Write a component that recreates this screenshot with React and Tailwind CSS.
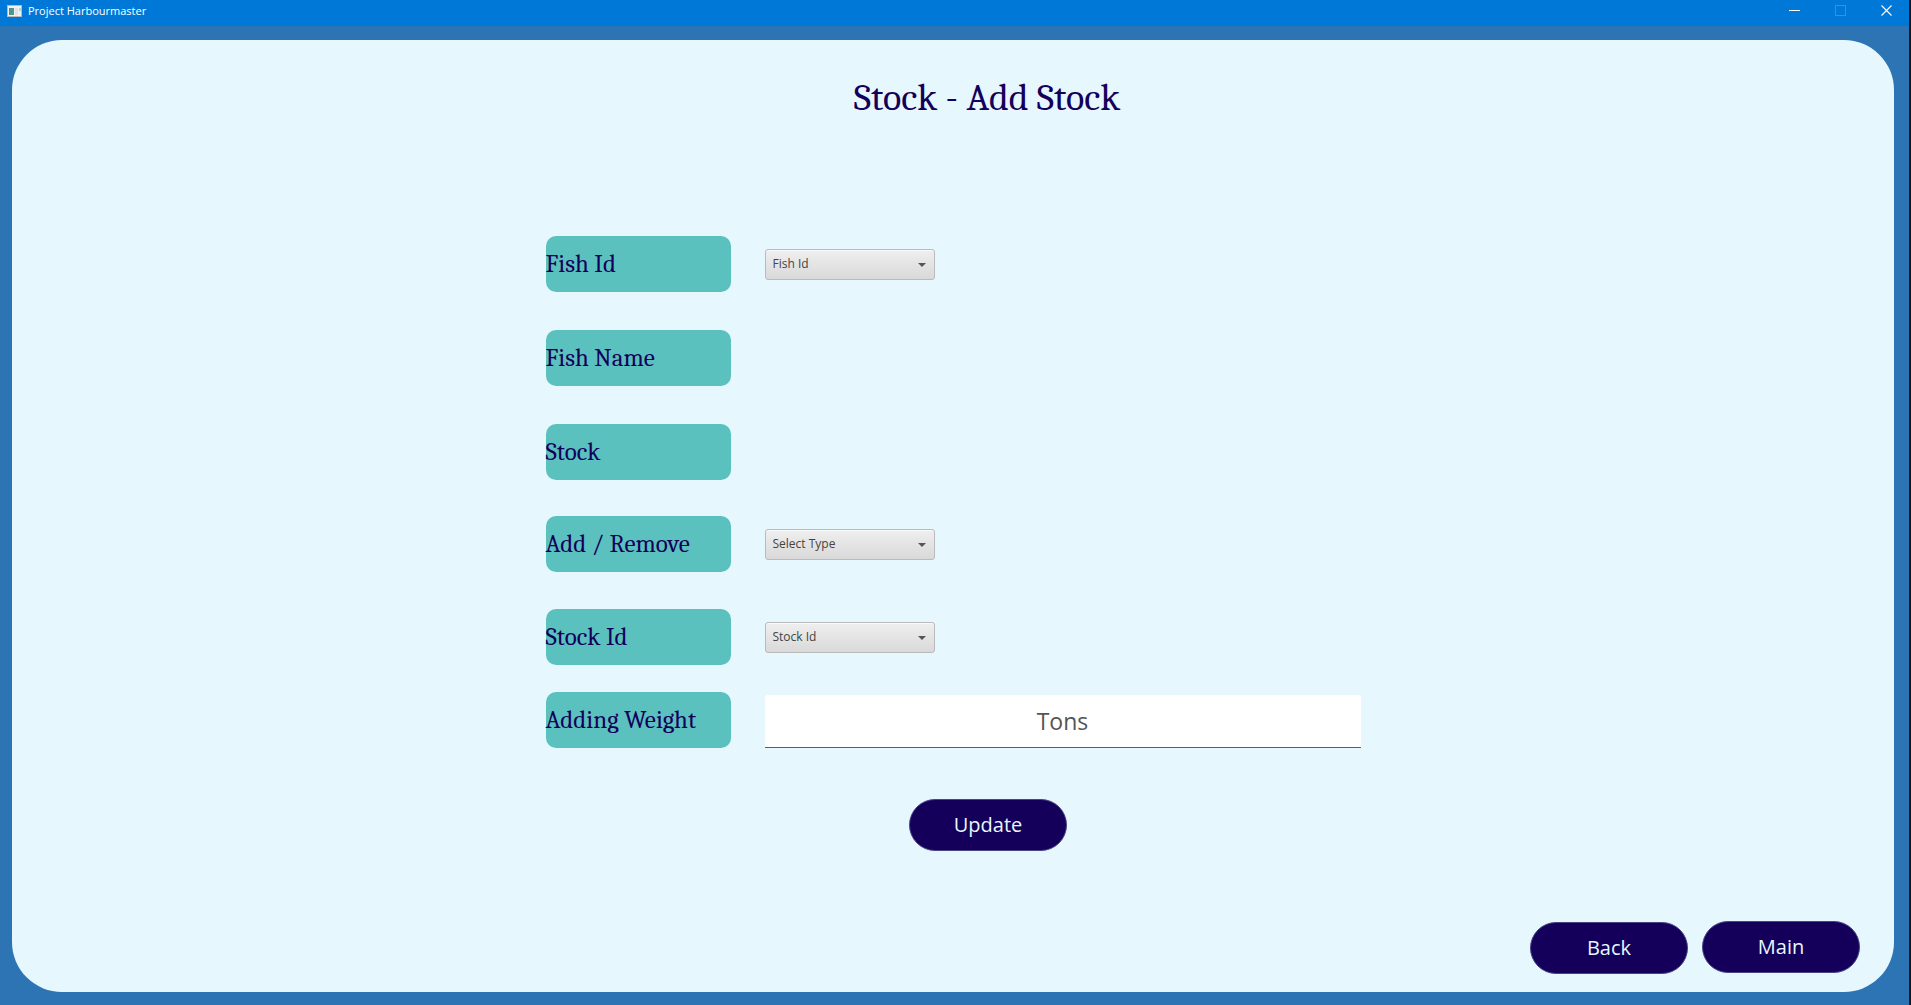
import React from "react";

const serif = "font-[Cambria,Caladea,'Liberation_Serif',serif]";
const pill =
  "h-[52px] w-[158px] rounded-full border border-[#4b4386] bg-[#14005a] text-[20px] text-[#e6f8fe]";

function TitleBar() {
  return (
    <header className="flex h-[26px] items-start justify-between bg-[#0078d7] text-white">
      <div className="flex h-[21px] items-center gap-[6px] pl-[7px]">
        <svg width="15" height="12" viewBox="0 0 15 12" aria-hidden="true">
          <defs>
            <linearGradient id="pane" x1="0" y1="0" x2="1" y2="1">
              <stop offset="0" stopColor="#4f87b0" />
              <stop offset="1" stopColor="#4fa36b" />
            </linearGradient>
          </defs>
          <rect width="15" height="12" fill="#b9b9b9" />
          <rect x="1" y="1" width="13" height="10" fill="#f1f1f1" />
          <rect x="2" y="3" width="5" height="7" fill="url(#pane)" />
          <rect x="8" y="3" width="3" height="7" fill="#e2e2e2" />
          <rect x="12" y="3" width="2" height="3" fill="#bcd8bd" />
        </svg>
        <span className="text-[11px] leading-[21px]">Project Harbourmaster</span>
      </div>
      <div className="flex h-5">
        <button aria-label="Minimize" className="flex w-[46px] items-center justify-center">
          <svg width="11" height="11" viewBox="0 0 11 11">
            <path d="M0 5.5H11" stroke="#fff" />
          </svg>
        </button>
        <button aria-label="Maximize" disabled className="flex w-[46px] items-center justify-center">
          <svg width="11" height="11" viewBox="0 0 11 11">
            <rect x=".5" y=".5" width="10" height="10" fill="none" stroke="#2f92e2" />
          </svg>
        </button>
        <button aria-label="Close" className="flex w-[46px] items-center justify-center">
          <svg width="11" height="11" viewBox="0 0 11 11">
            <path d="M.5 .5L10.5 10.5M10.5 .5L.5 10.5" stroke="#fff" strokeWidth="1.1" />
          </svg>
        </button>
      </div>
    </header>
  );
}

function Tag({ htmlFor, children }) {
  const Element = htmlFor ? "label" : "span";
  return (
    <Element
      htmlFor={htmlFor}
      className={`${serif} flex h-14 w-[185px] shrink-0 items-center rounded-[10px] bg-[#5ac1bf] text-[25px] leading-7 text-[#14005a]`}
    >
      {children}
    </Element>
  );
}

function Dropdown({ id, text }) {
  return (
    <div className="relative">
      <select
        id={id}
        className="h-[31px] w-[170px] appearance-none rounded-[3px] border border-[#bababa] bg-linear-to-b from-[#efefef] to-[#d9d9d9] pl-[7px] text-[12px] text-[#444444] shadow-[inset_0_1px_0_#fafafa]"
      >
        <option>{text}</option>
      </select>
      <svg
        className="pointer-events-none absolute top-[14px] right-[9px]"
        width="8"
        height="4"
        viewBox="0 0 8 4"
        aria-hidden="true"
      >
        <path d="M0 0H8L4 4Z" fill="#555" />
      </svg>
    </div>
  );
}

function Row({ gap, children }) {
  return <div className={`flex items-center gap-[34px] ${gap}`}>{children}</div>;
}

export default function App() {
  return (
    <div className="min-h-screen bg-[#15181c] pr-[2px] font-['Segoe_UI','Open_Sans','Noto_Sans',sans-serif]">
      <div className="flex min-h-screen flex-col bg-[#2d74b5]">
        <TitleBar />
        <main className="mt-[14px] mr-[15px] mb-[13px] ml-[12px] flex flex-1 flex-col rounded-[50px] bg-[#e6f8fe]">
          <h1
            className={`${serif} mt-[36px] pl-[68px] text-center text-[38px] leading-[44px] text-[#14005a]`}
          >
            Stock - Add Stock
          </h1>
          <form className="mx-auto mt-[116px] flex w-full max-w-[815px] flex-col">
            <Row gap="mb-[38px]">
              <Tag htmlFor="fish-id">Fish Id</Tag>
              <Dropdown id="fish-id" text="Fish Id" />
            </Row>
            <Row gap="mb-[38px]">
              <Tag>Fish Name</Tag>
            </Row>
            <Row gap="mb-[36px]">
              <Tag>Stock</Tag>
            </Row>
            <Row gap="mb-[37px]">
              <Tag htmlFor="type">Add / Remove</Tag>
              <Dropdown id="type" text="Select Type" />
            </Row>
            <Row gap="mb-[27px]">
              <Tag htmlFor="stock-id">Stock Id</Tag>
              <Dropdown id="stock-id" text="Stock Id" />
            </Row>
            <Row gap="mb-[51px]">
              <Tag htmlFor="weight">Adding Weight</Tag>
              <input
                id="weight"
                placeholder="Tons"
                className="h-[53px] min-w-0 flex-1 self-end rounded-t-[3px] border-b border-[#4d6468] bg-white text-center text-[23px] text-[#555] placeholder:text-[#555]"
              />
            </Row>
            <div className="flex justify-center pl-[70px]">
              <button type="button" className={pill}>Update</button>
            </div>
          </form>
          <nav className="mt-auto mr-[34px] mb-[18px] flex items-start justify-end gap-[14px]">
            <button className={`${pill} mt-px`}>Back</button>
            <button className={pill}>Main</button>
          </nav>
        </main>
      </div>
    </div>
  );
}
